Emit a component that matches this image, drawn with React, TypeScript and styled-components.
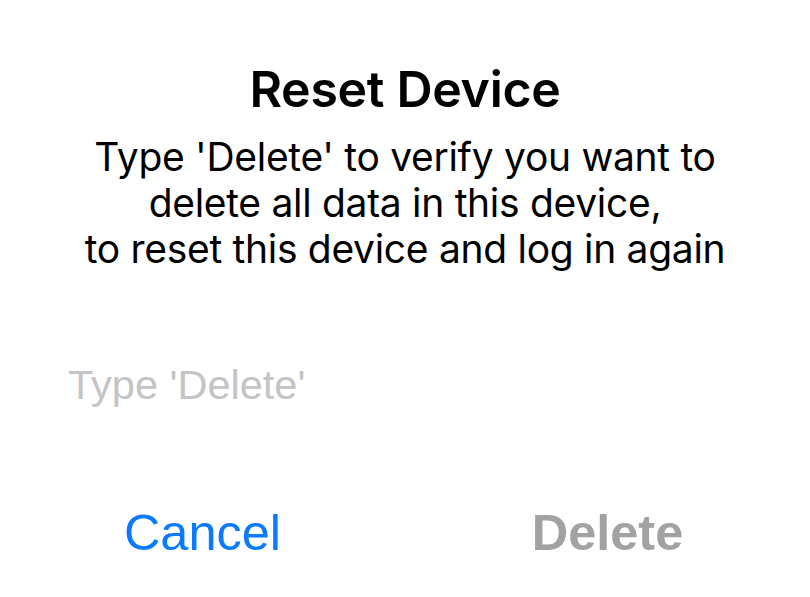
import React from 'react'
import styled, { createGlobalStyle } from 'styled-components'

const GlobalStyle = createGlobalStyle`
  html, body {
    margin: 0;
    padding: 0;
    background: #ffffff;
  }
  body {
    font-family: Inter, "Liberation Sans", sans-serif;
    -webkit-font-smoothing: antialiased;
  }
`

const Dialog = styled.div`
  width: 810px;
  height: 597px;
  display: flex;
  flex-direction: column;
  background: #fff;
  overflow: hidden;
`

const Header = styled.div`
  display: flex;
  flex-direction: column;
  align-items: center;
  padding-top: 62px;
`

const Title = styled.h1`
  margin: 0;
  font-family: Inter, sans-serif;
  font-weight: 600;
  font-size: 50px;
  line-height: 54px;
  color: #000;
  letter-spacing: -0.3px;
`

const Message = styled.p`
  margin: 18px 0 0;
  font-family: Inter, sans-serif;
  font-weight: 400;
  font-size: 39px;
  line-height: 46px;
  color: #000;
  text-align: center;
  letter-spacing: -0.3px;
`

const Field = styled.input`
  margin: 90px 0 0 68px;
  width: 674px;
  border: none;
  outline: none;
  padding: 0;
  background: transparent;
  font-family: "Liberation Sans", Arial, sans-serif;
  font-size: 41.5px;
  line-height: 46px;
  height: 46px;
  color: #000;

  &::placeholder {
    color: #c4c4c6;
  }
`

const Actions = styled.div`
  display: grid;
  grid-template-columns: 1fr 1fr;
  margin-top: 94px;
`

const ActionButton = styled.button<{ $primary?: boolean }>`
  border: none;
  background: transparent;
  padding: 0;
  height: 60px;
  font-family: "Liberation Sans", Arial, sans-serif;
  font-size: 50.5px;
  font-weight: ${({ $primary }) => ($primary ? 700 : 400)};
  color: ${({ $primary }) => ($primary ? '#a2a2a2' : '#0a7aff')};
  cursor: pointer;
`

export default function App() {
  return (
    <>
      <GlobalStyle />
      <Dialog>
        <Header>
          <Title>Reset Device</Title>
          <Message>
            Type 'Delete' to verify you want to
            <br />
            delete all data in this device,
            <br />
            to reset this device and log in again
          </Message>
        </Header>
        <Field placeholder="Type 'Delete'" />
        <Actions>
          <ActionButton>Cancel</ActionButton>
          <ActionButton $primary>Delete</ActionButton>
        </Actions>
      </Dialog>
    </>
  )
}
